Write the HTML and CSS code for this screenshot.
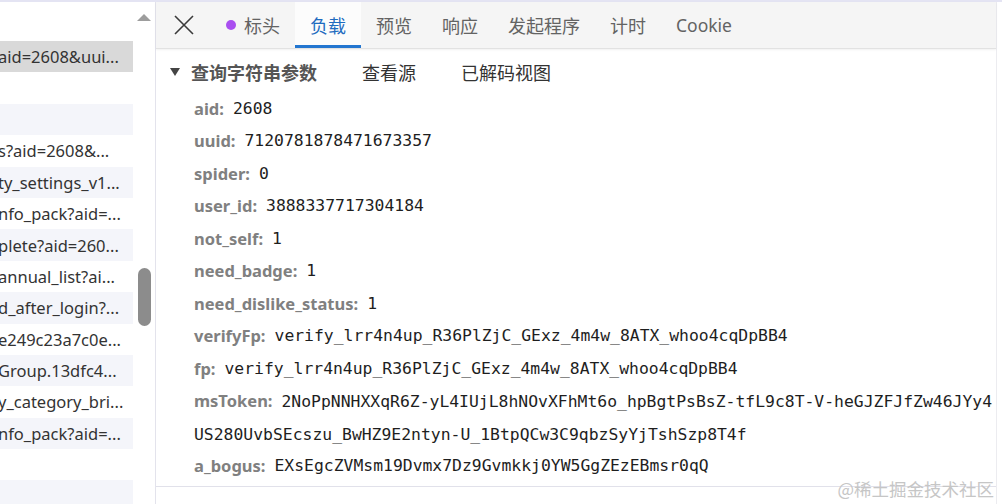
FILE: index.html
```html
<!DOCTYPE html>
<html lang="zh-CN">
<head>
<meta charset="utf-8">
<title>负载</title>
<link rel="stylesheet" href="styles.css">
</head>
<body>
<div class="app">
  <aside class="left">
    <div class="list">
      <div class="row sel"><span class="url">aid=2608&amp;uui...</span></div>
      <div class="row"></div>
      <div class="row alt"></div>
      <div class="row"><span class="url">s?aid=2608&amp;...</span></div>
      <div class="row alt"><span class="url">ty_settings_v1...</span></div>
      <div class="row"><span class="url">nfo_pack?aid=...</span></div>
      <div class="row alt"><span class="url">plete?aid=260...</span></div>
      <div class="row"><span class="url">annual_list?ai...</span></div>
      <div class="row alt"><span class="url">d_after_login?...</span></div>
      <div class="row"><span class="url">e249c23a7c0e...</span></div>
      <div class="row alt"><span class="url">Group.13dfc4...</span></div>
      <div class="row"><span class="url">y_category_bri...</span></div>
      <div class="row alt"><span class="url">nfo_pack?aid=...</span></div>
      <div class="row"></div>
      <div class="row alt"></div>
    </div>
    <div class="vscroll">
      <div class="arrow-up"></div>
      <div class="thumb"></div>
    </div>
  </aside>
  <main class="right">
    <nav class="tabbar">
      <div class="close">
        <svg width="20" height="20" viewBox="0 0 20 20"><path d="M1 1L19 19M19 1L1 19" stroke="#3a3a3a" stroke-width="1.6" fill="none"/></svg>
      </div>
      <div class="tab"><span class="dot"></span>标头</div>
      <div class="tab active">负载</div>
      <div class="tab">预览</div>
      <div class="tab">响应</div>
      <div class="tab">发起程序</div>
      <div class="tab">计时</div>
      <div class="tab latin">Cookie</div>
    </nav>
    <section class="content">
      <div class="section-head">
        <span class="tri"></span>
        <span class="title">查询字符串参数</span>
        <span class="link">查看源</span>
        <span class="link">已解码视图</span>
      </div>
      <div class="params">
        <div class="param"><span class="k">aid:</span><span class="v">2608</span></div>
        <div class="param"><span class="k">uuid:</span><span class="v">7120781878471673357</span></div>
        <div class="param"><span class="k">spider:</span><span class="v">0</span></div>
        <div class="param"><span class="k">user_id:</span><span class="v">3888337717304184</span></div>
        <div class="param"><span class="k">not_self:</span><span class="v">1</span></div>
        <div class="param"><span class="k">need_badge:</span><span class="v">1</span></div>
        <div class="param"><span class="k">need_dislike_status:</span><span class="v">1</span></div>
        <div class="param"><span class="k">verifyFp:</span><span class="v">verify_lrr4n4up_R36PlZjC_GExz_4m4w_8ATX_whoo4cqDpBB4</span></div>
        <div class="param"><span class="k">fp:</span><span class="v">verify_lrr4n4up_R36PlZjC_GExz_4m4w_8ATX_whoo4cqDpBB4</span></div>
        <div class="param wrap"><span class="k">msToken:</span><span class="v">2NoPpNNHXXqR6Z-yL4IUjL8hNOvXFhMt6o_hpBgtPsBsZ-tfL9c8T-V-heGJZFJfZw46JYy4<br>US280UvbSEcszu_BwHZ9E2ntyn-U_1BtpQCw3C9qbzSyYjTshSzp8T4f</span></div>
        <div class="param"><span class="k">a_bogus:</span><span class="v">EXsEgcZVMsm19Dvmx7Dz9Gvmkkj0YW5GgZEzEBmsr0qQ</span></div>
      </div>
    </section>
    <div class="watermark">@稀土掘金技术社区</div>
  </main>
</div>
</body>
</html>
```

FILE: styles.css
```css
html, body {
  margin: 0;
  padding: 0;
  background: #ffffff;
}
body {
  width: 1002px;
  height: 504px;
  overflow: hidden;
  font-family: "Noto Sans", "Noto Sans CJK SC", sans-serif;
  color: #333;
}
.app {
  display: flex;
  height: 502px;
  border-top: 2px solid #e4e4f3;
}
.left {
  width: 155px;
  flex: none;
  display: flex;
  border-right: 1px solid #e3e3ec;
  background: #fff;
}
.list {
  width: 133px;
  padding-top: 39px;
  overflow: hidden;
}
.row {
  height: 31.4px;
  display: flex;
  align-items: center;
  overflow: hidden;
  white-space: nowrap;
}
.row.alt { background: #f4f5fa; }
.row.sel { background: #d9d9d9; }
.url {
  flex: none;
  margin-left: -2px;
  font-size: 16.5px;
  color: #333;
  font-family: "Noto Sans", sans-serif;
}
.vscroll {
  width: 22px;
  display: flex;
  flex-direction: column;
  align-items: center;
  padding-top: 12px;
}
.arrow-up {
  width: 0;
  height: 0;
  border-left: 7px solid transparent;
  border-right: 7px solid transparent;
  border-bottom: 7px solid #9d9d9d;
}
.thumb {
  margin-top: 247px;
  width: 13px;
  height: 58px;
  border-radius: 7px;
  background: #8c8c8c;
}
.right {
  position: relative;
  width: 840px;
  flex: none;
  display: flex;
  flex-direction: column;
  border-right: 1px solid #ececf0;
}
.tabbar {
  height: 46px;
  display: flex;
  align-items: stretch;
  background: #f5f5f5;
  border-bottom: 1px solid #e2e2e2;
  box-shadow: 0 1px 2px rgba(0,0,0,0.06);
}
.close {
  width: 55px;
  display: flex;
  align-items: center;
  justify-content: center;
  padding-bottom: 1px;
}
.tab {
  display: flex;
  align-items: center;
  padding: 0 15px;
  font-family: "Noto Sans CJK SC", sans-serif;
  font-size: 18px;
  color: #636363;
  border-bottom: 3px solid transparent;
  padding-top: 2px;
}
.tab.latin {
  font-family: "Noto Sans", sans-serif;
  font-size: 17.5px;
}
.tab.active {
  color: #1f6cc0;
  background: #fcfcfc;
  border-bottom-color: #2376d0;
}
.dot {
  width: 10px;
  height: 10px;
  border-radius: 50%;
  background: #a94ff0;
  margin-right: 8px;
}
.content {
  flex: 1;
  display: flex;
  flex-direction: column;
  padding-top: 7px;
}
.section-head {
  height: 32px;
  display: flex;
  align-items: center;
  padding-left: 14px;
  font-family: "Noto Sans CJK SC", sans-serif;
  font-size: 18px;
}
.tri {
  width: 0;
  height: 0;
  border-left: 5px solid transparent;
  border-right: 5px solid transparent;
  border-top: 8px solid #444;
  margin-right: 11px;
}
.title {
  font-weight: bold;
  color: #555;
  margin-right: 45px;
}
.link {
  color: #333;
  margin-right: 45px;
}
.params {
  padding-left: 38px;
  padding-top: 4px;
  padding-bottom: 4px;
  border-bottom: 1px solid #e1e1ea;
}
.param {
  height: 32.5px;
  display: flex;
  align-items: center;
  white-space: nowrap;
}
.param.wrap {
  height: 65px;
  display: block;
  white-space: normal;
  line-height: 32px;
}
.k {
  font-family: "Noto Sans", sans-serif;
  font-weight: bold;
  font-size: 16.5px;
  color: #808080;
  margin-right: 9px;
}
.v {
  font-family: "DejaVu Sans Mono", monospace;
  font-size: 16.4px;
  color: #1e1e1e;
}
.wrap .v { white-space: nowrap; }
.watermark {
  position: absolute;
  right: 2px;
  bottom: 3px;
  font-family: "Noto Sans CJK SC", sans-serif;
  font-size: 17.5px;
  color: #c6c6c6;
  white-space: nowrap;
}
```
